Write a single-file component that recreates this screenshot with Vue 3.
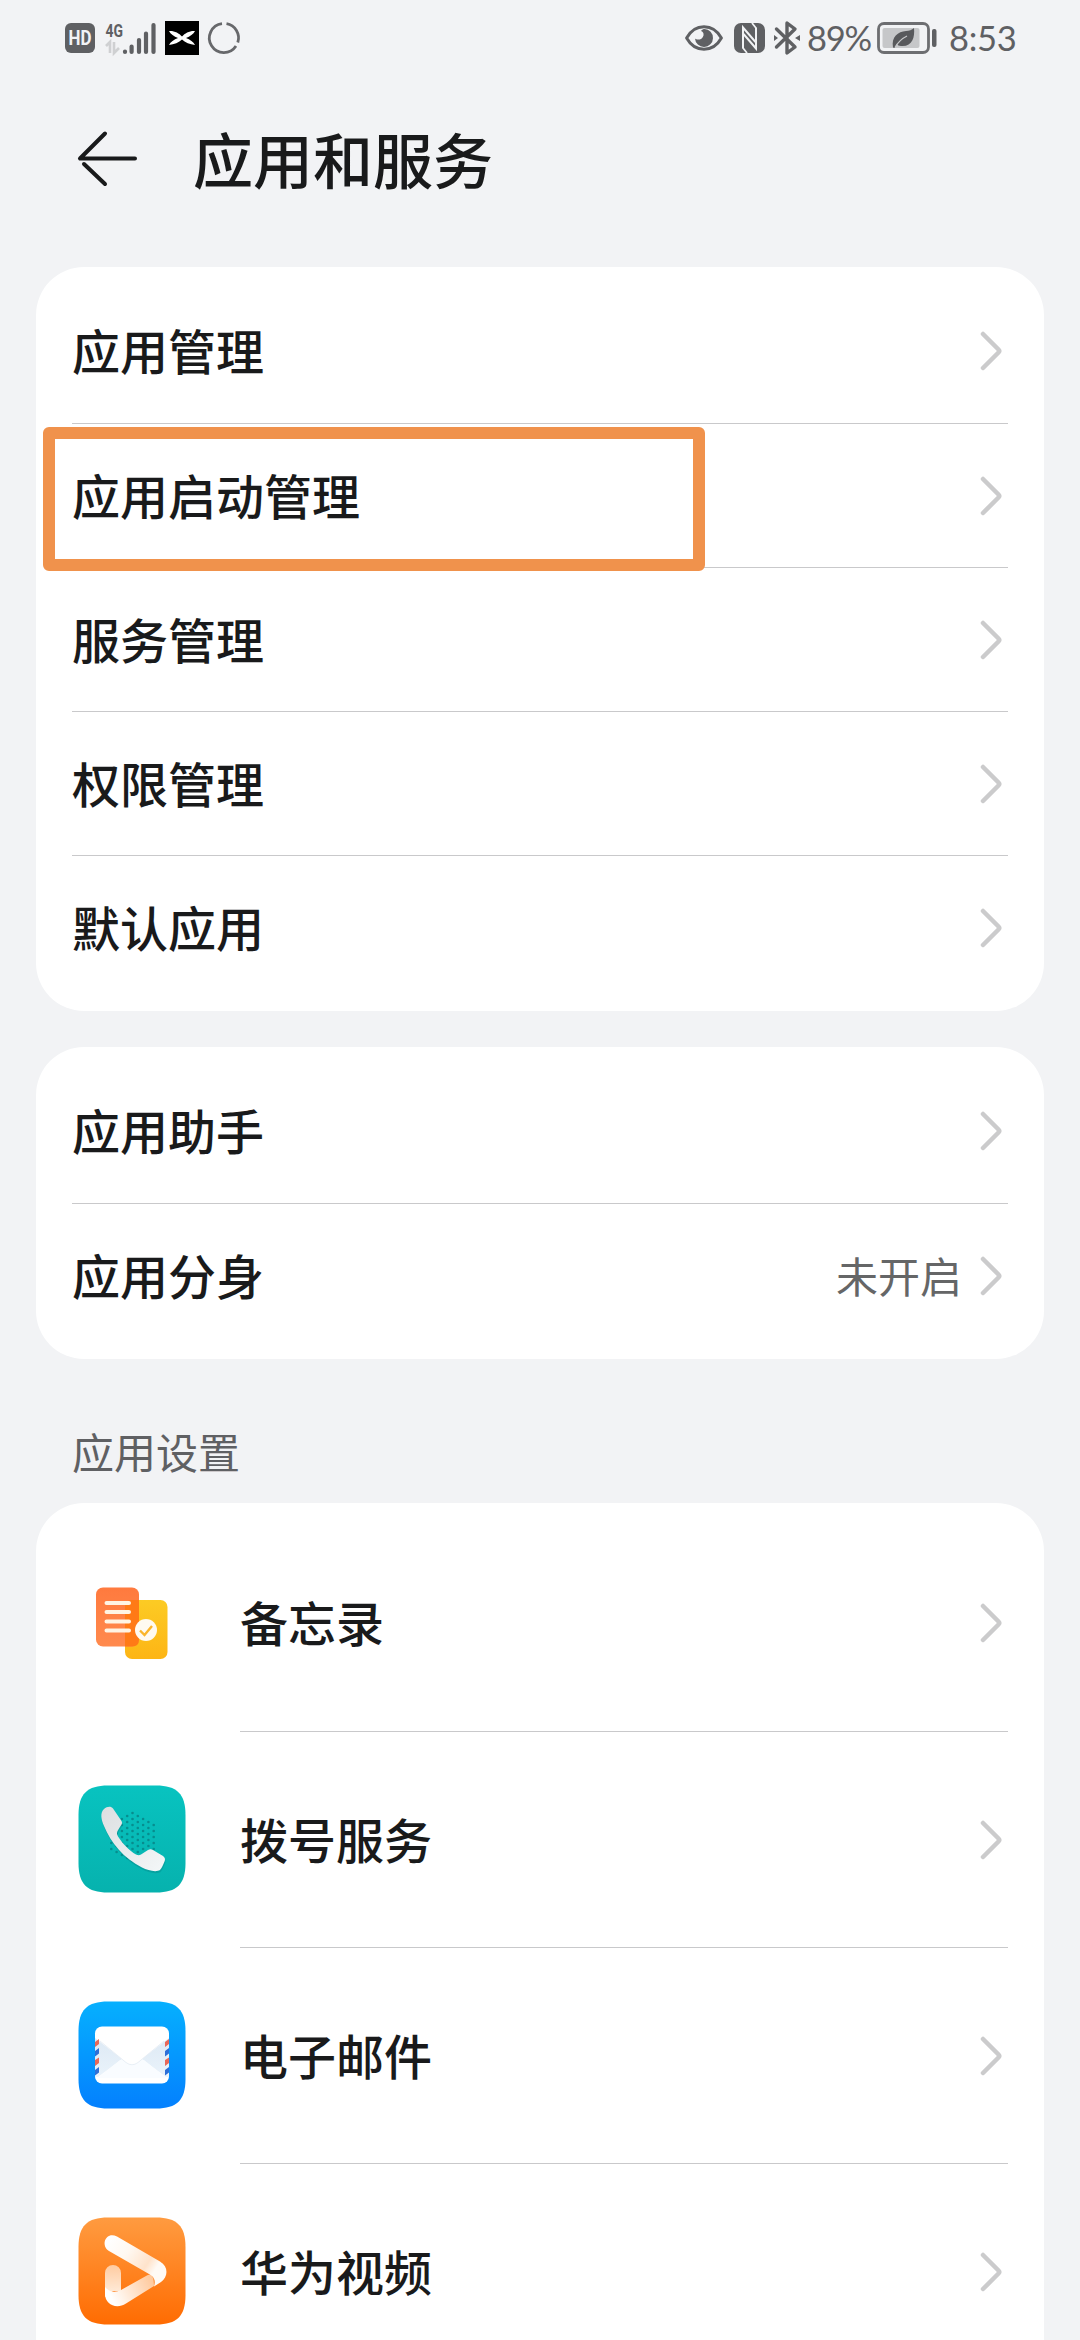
<template>
  <div class="page">
    <div class="status-bar">
      <svg class="hd" width="30" height="30" viewBox="0 0 30 30">
        <rect width="30" height="30" rx="6" fill="#5f6063" />
        <text x="15" y="22" class="hd-text" text-anchor="middle" textLength="23" lengthAdjust="spacingAndGlyphs">HD</text>
      </svg>
      <svg class="signal" width="52" height="42" viewBox="0 -4 52 42">
        <text x="0.500" y="15.500" class="net-text" textLength="17.500" lengthAdjust="spacingAndGlyphs">4G</text>
        <path d="M1 25 L5 21 V32 M9 21 V32 L14 27" fill="none" stroke="#cfd0d2" stroke-width="2.600" />
        <path d="M20 30.600 V31 M26.600 25.500 V31 M34 19 V31 M41 12.500 V31 M48.500 4 V31" fill="none" stroke="#5f6063" stroke-width="4.200" stroke-linecap="round" />
      </svg>
      <svg class="xapp" width="34" height="34" viewBox="0 0 34 34">
        <rect width="34" height="34" fill="#000" />
        <path d="M4 10 C9 9.500 14 12 17 15.500 C20 12 25 9.500 30 10 C28.500 13 25 15.500 21 17 C25 18.500 28.500 21 30 24 C25 23.500 20 21.500 17 18.500 C14 21.500 9 23.500 4 24 C5.500 21 9 18.500 13 17 C9 15.500 5.500 13 4 10 Z" fill="#fff" />
      </svg>
      <svg class="ring" width="34" height="34" viewBox="0 0 34 34">
        <path d="M19.500 2.700 A14.500 14.500 0 0 1 30.800 21.500 M29 25 A14.500 14.500 0 1 1 15 2.700" fill="none" stroke="#67686b" stroke-width="2.800" />
      </svg>

      <div class="status-right">
        <svg class="eye" width="38" height="26" viewBox="0 0 38 26">
          <path d="M1.600 13 C10 -2 28 -2 36.400 13 C28 28 10 28 1.600 13 Z" fill="none" stroke="#5f6063" stroke-width="3" stroke-linejoin="round" />
          <path d="M19.500 4 A9 9 0 1 1 10 13.500 C12 15.500 17.500 15 18.500 10.500 C19 8 17.500 6.500 16 6 C17 4.500 18.500 4 19.500 4 Z" fill="#5f6063" />
        </svg>
        <svg class="nfc" width="31" height="30" viewBox="0 0 31 30">
          <rect width="31" height="30" rx="7" fill="#5f6063" />
          <path d="M9 25.500 V4.500 L21.500 19 M22 4.500 V25.500 L9.500 11" fill="none" stroke="#f2f3f5" stroke-width="2" />
          <path d="M9 25 L13 30 M18 0 L22 5" stroke="#f2f3f5" stroke-width="1.800" />
        </svg>
        <svg class="bt" width="26" height="34" viewBox="0 0 26 34">
          <path d="M2.500 8 L21 26 L13 32 V2 L21 8 L2.500 26" fill="none" stroke="#5f6063" stroke-width="3.400" stroke-linejoin="round" stroke-linecap="round" />
          <path d="M0 14 L4 17 L0 20 Z M26 14 L21 17 L26 20 Z" fill="#5f6063" />
        </svg>
        <span class="percent">89%</span>
        <svg class="battery" width="60" height="32" viewBox="0 0 60 32">
          <rect x="1.500" y="1.500" width="50" height="29" rx="5.500" fill="none" stroke="#6d6e71" stroke-width="2.800" />
          <rect x="5.500" y="6" width="37" height="20" rx="2" fill="#c6c7c9" />
          <path d="M37 6 C38 16 35 25 24 24 C22 24 20.500 23 20 22 L17.500 26 L16 25.500 C14 15 21 9.500 29 9 C32 8.800 35 8 37 6 Z" fill="#58595c" />
          <path d="M18 25.500 C21 20 25 16.500 30 14" fill="none" stroke="#c6c7c9" stroke-width="1.300" />
          <rect x="55" y="7" width="4.500" height="18" rx="2" fill="#5f6063" />
        </svg>
        <span class="time">8:53</span>
      </div>
    </div>

    <div class="header">
      <svg class="back" width="62" height="58" viewBox="0 0 62 58">
        <path d="M28 3.500 L3 28.500 H58 M7 34 L28 54" fill="none" stroke="#191a1b" stroke-width="4" stroke-linecap="round" stroke-linejoin="round" />
      </svg>
      <h1>应用和服务</h1>
    </div>

    <div class="card" v-for="(group, groupIndex) in groups" :key="groupIndex">
      <div class="row" v-for="item in group" :key="item.name">
        <span class="name">{{ item.name }}</span>
        <span class="value" v-if="item.value">{{ item.value }}</span>
        <svg class="chevron" width="24" height="42" viewBox="0 0 24 42">
          <path d="M4 4 L19.500 19.500 Q21 21 19.500 22.500 L4 38" />
        </svg>
        <div class="highlight" v-if="item.marked"></div>
      </div>
    </div>

    <p class="section">应用设置</p>

    <div class="card apps">
      <div class="app-row" v-for="app in apps" :key="app.id">
        <svg v-if="app.id === 'memo'" class="app-icon" viewBox="0 0 108 108">
          <defs>
            <linearGradient id="memoBack" x1="0" y1="0" x2="0" y2="1">
              <stop offset="0" stop-color="#fccb24" />
              <stop offset="1" stop-color="#fdb515" />
            </linearGradient>
            <linearGradient id="memoFront" x1="0" y1="0" x2="0" y2="1">
              <stop offset="0" stop-color="#ff7a3e" />
              <stop offset="1" stop-color="#ff8a4e" />
            </linearGradient>
          </defs>
          <rect x="47" y="31" width="42.500" height="59" rx="7" fill="url(#memoBack)" />
          <rect x="18" y="18.500" width="43" height="59" rx="7" fill="url(#memoFront)" />
          <path d="M47 77.500 V38 Q47 31 54 31 H61 V70.500 Q61 77.500 54 77.500 Z" fill="#ff7a16" />
          <path d="M28.500 34 H51 M28.500 43 H51 M28.500 52.500 H51 M28.500 61.500 H51" stroke="#fff4e4" stroke-width="4" stroke-linecap="round" />
          <circle cx="68" cy="61" r="11" fill="#fffaf0" />
          <path d="M62 61.500 L66.500 66 L74 57" fill="none" stroke="#fbb52a" stroke-width="2.400" />
        </svg>

        <svg v-else-if="app.id === 'phone'" class="app-icon" viewBox="0 0 108 108">
          <defs>
            <linearGradient id="phoneBg" x1="0" y1="0" x2="0" y2="1">
              <stop offset="0" stop-color="#08c3c0" />
              <stop offset="1" stop-color="#06b2ae" />
            </linearGradient>
            <linearGradient id="phoneHandle" x1="0" y1="0" x2="1" y2="1">
              <stop offset="0" stop-color="#dcdfe1" />
              <stop offset="1" stop-color="#f4f7f8" />
            </linearGradient>
          </defs>
          <path :d="tile" fill="url(#phoneBg)" />
          <circle v-for="(dot, dotIndex) in dots" :key="dotIndex" :cx="dot.x" :cy="dot.y" r="1.300" fill="#078d8e" />
          <path d="M26 24 C29 21.500 33 21 35 23.500 L43.500 36 C44.500 38 44 39 42.500 41 L39.500 46 C38.500 48 39 49.500 40 51.500 C45 59 51 65.500 58 69.500 C60 70.500 61.500 70.500 63 69.500 L70 65 C72 64 73 64 75 65 L85 71 C87 72.500 87.500 74.500 86.500 76.500 C85 80 84 83 82 85 C78 87.500 70 85.500 64 82.500 C46 73.500 33 58 26 41 C23 34 22 28 26 24 Z" fill="#058f90" opacity="0.5" transform="translate(0.500 2)" />
          <path d="M26 24 C29 21.500 33 21 35 23.500 L43.500 36 C44.500 38 44 39 42.500 41 L39.500 46 C38.500 48 39 49.500 40 51.500 C45 59 51 65.500 58 69.500 C60 70.500 61.500 70.500 63 69.500 L70 65 C72 64 73 64 75 65 L85 71 C87 72.500 87.500 74.500 86.500 76.500 C85 80 84 83 82 85 C78 87.500 70 85.500 64 82.500 C46 73.500 33 58 26 41 C23 34 22 28 26 24 Z" fill="url(#phoneHandle)" />
        </svg>

        <svg v-else-if="app.id === 'mail'" class="app-icon" viewBox="0 0 108 108">
          <defs>
            <linearGradient id="mailBg" x1="0" y1="0" x2="0" y2="1">
              <stop offset="0" stop-color="#06b0fe" />
              <stop offset="1" stop-color="#0480fe" />
            </linearGradient>
            <linearGradient id="mailSide" x1="0" y1="0" x2="0" y2="1">
              <stop offset="0" stop-color="#dde9f4" />
              <stop offset="1" stop-color="#eaf3fb" />
            </linearGradient>
          </defs>
          <path :d="tile" fill="url(#mailBg)" />
          <rect x="17" y="25.500" width="74" height="57" rx="7" fill="#fff" />
          <path d="M17 37 L44 58 L20 76 H17 Z M91 37 L64 58 L88 76 H91 Z" fill="url(#mailSide)" />
          <path d="M20 77 L42 59 H66 L88 77 Z" fill="#f9fcff" />
          <path d="M17 36 L48 61.500 Q54 66 60 61.500 L91 36 L88 29 H20 Z" fill="#fff" />
          <path d="M22 40 L48 61.500 Q54 66 60 61.500 L86 40" fill="none" stroke="#e3ebf2" stroke-width="0.800" />
          <path d="M17 41 L21 38 V43 L17 46 Z M17 59 L21 56.500 V62 L17 65 Z M91 38 L87 41 V46 L91 43 Z M91 56.500 L87 59 V65 L91 62 Z" fill="#e8695a" />
          <path d="M17 50 L21 47 V52.500 L17 55.500 Z M17 69 L21 66 V71.500 L17 74.500 Z M91 47 L87 50 V55.500 L91 52.500 Z M91 66 L87 69 V74.500 L91 71.500 Z" fill="#2e6fd6" />
        </svg>

        <svg v-else class="app-icon" viewBox="0 0 108 108">
          <defs>
            <linearGradient id="videoBg" x1="0" y1="0" x2="0" y2="1">
              <stop offset="0" stop-color="#ff9b40" />
              <stop offset="1" stop-color="#ff6c02" />
            </linearGradient>
            <linearGradient id="videoTop" gradientUnits="userSpaceOnUse" x1="30" y1="24" x2="84" y2="60">
              <stop offset="0" stop-color="#fff" />
              <stop offset="0.350" stop-color="#fff8f1" />
              <stop offset="0.700" stop-color="#ffe3cb" />
              <stop offset="0.850" stop-color="#fffaf5" />
            </linearGradient>
            <linearGradient id="videoLow" gradientUnits="userSpaceOnUse" x1="34" y1="82" x2="80" y2="58">
              <stop offset="0" stop-color="#fff" />
              <stop offset="1" stop-color="#ffc08c" />
            </linearGradient>
            <linearGradient id="videoLeft" x1="0" y1="0" x2="0" y2="1">
              <stop offset="0" stop-color="#ffcba0" />
              <stop offset="1" stop-color="#fff0e2" />
            </linearGradient>
          </defs>
          <path :d="tile" fill="url(#videoBg)" />
          <path d="M27 56 A8 8 0 0 1 43 56 V74 H35 L27 80 Z" fill="url(#videoLeft)" />
          <path d="M27 70 C31 75 37 76 43 73 L68 59 Q76 54 76 69 L48 86.500 C38 93 27 87 27 77 Z" fill="url(#videoLow)" />
          <path d="M39 19.500 L82 44.500 C91 50 90 60 83 65 L76 69.500 C78 63 76 60 71 57 L31 34 C22 28 28 14 39 19.500 Z" fill="url(#videoTop)" />
        </svg>

        <div class="app-body">
          <span class="name">{{ app.name }}</span>
          <svg class="chevron" width="24" height="42" viewBox="0 0 24 42">
            <path d="M4 4 L19.500 19.500 Q21 21 19.500 22.500 L4 38" />
          </svg>
        </div>
      </div>
    </div>
  </div>
</template>

<script setup>
const groups = [
  [
    { name: '应用管理' },
    { name: '应用启动管理', marked: true },
    { name: '服务管理' },
    { name: '权限管理' },
    { name: '默认应用' }
  ],
  [
    { name: '应用助手' },
    { name: '应用分身', value: '未开启' }
  ]
];

const apps = [
  { id: 'memo', name: '备忘录' },
  { id: 'phone', name: '拨号服务' },
  { id: 'mail', name: '电子邮件' },
  { id: 'video', name: '华为视频' }
];

// rounded tile shared by the app icons
const tile = 'M30 0.5 H78 C99 0.5 107.5 9 107.5 30 V78 C107.5 99 99 107.5 78 107.5 H30 C9 107.5 0.5 99 0.5 78 V30 C0.5 9 9 0.5 30 0.5 Z';

// hexagonal dot pattern behind the handset
const dots = [];
for (let col = -4; col <= 4; col++) {
  const count = 9 - Math.abs(col);
  for (let i = 0; i < count; i++) {
    dots.push({ x: 54.5 + col * 5.3, y: 52 + (i - (count - 1) / 2) * 6 });
  }
}
</script>

<style>
body {
  margin: 0;
  background: #f2f3f5;
}
</style>

<style scoped>
.page {
  width: 1080px;
  height: 2340px;
  overflow: hidden;
  background: #f2f3f5;
  color: #191a1b;
  font-family: 'Noto Sans CJK SC', sans-serif;
}

.status-bar {
  display: flex;
  align-items: center;
  height: 76px;
  padding: 0 65px;
  box-sizing: border-box;
}

.status-bar svg {
  flex: none;
  overflow: visible;
}

.hd-text {
  font-family: Roboto, sans-serif;
  font-size: 20px;
  font-weight: 700;
  fill: #f2f3f5;
}

.net-text {
  font-family: Roboto, sans-serif;
  font-size: 19px;
  font-weight: 700;
  fill: #5f6063;
}

.signal {
  margin-left: 10px;
}

.xapp {
  margin-left: 8px;
}

.ring {
  margin-left: 8px;
}

.status-right {
  display: flex;
  align-items: center;
  margin-left: auto;
  color: #5f6063;
  font-family: Lato, sans-serif;
  font-size: 34.5px;
  line-height: 40px;
}

.nfc {
  margin-left: 11px;
}

.bt {
  margin-left: 9px;
}

.percent {
  width: 63px;
  margin-left: 7px;
  padding-bottom: 1px;
  letter-spacing: -1.2px;
  white-space: nowrap;
}

.battery {
  margin-left: 7px;
}

.time {
  width: 66px;
  margin-left: 12px;
  padding-bottom: 1px;
  letter-spacing: -0.3px;
  white-space: nowrap;
}

.header {
  display: flex;
  align-items: center;
  height: 166px;
  margin-bottom: 25px;
  padding-left: 77px;
}

.back {
  margin-right: 54px;
}

h1 {
  margin: 0;
  padding-bottom: 2px;
  font-size: 60px;
  font-weight: 500;
  line-height: 80px;
}

.card {
  margin: 0 36px 36px;
  padding: 12px 36px;
  border-radius: 48px;
  background: #fff;
}

.row {
  position: relative;
  display: flex;
  align-items: center;
  height: 144px;
  box-sizing: border-box;
}

.row + .row {
  border-top: 1px solid #c9c9cb;
}

.name {
  flex: 1;
  padding-bottom: 4px;
  font-size: 48px;
  font-weight: 500;
  line-height: 64px;
}

.value {
  margin-right: 17px;
  padding-bottom: 2px;
  color: #656667;
  font-size: 42px;
}

.chevron {
  margin-right: 5px;
}

.chevron path {
  fill: none;
  stroke: #cbcbcc;
  stroke-width: 4.5;
  stroke-linecap: round;
}

.highlight {
  position: absolute;
  top: 3px;
  left: -29px;
  width: 662px;
  height: 144px;
  box-sizing: border-box;
  border: 12px solid #f0924c;
  border-radius: 6px;
  z-index: 1;
}

.section {
  margin: 0;
  padding: 26px 72px 22px;
  color: #5f6063;
  font-size: 42px;
  line-height: 60px;
}

.apps {
  margin-bottom: 0;
}

.app-row {
  display: flex;
  align-items: center;
  height: 216px;
}

.app-icon {
  flex: none;
  width: 108px;
  height: 108px;
  margin-left: 6px;
}

.app-body {
  flex: 1;
  display: flex;
  align-items: center;
  height: 216px;
  margin-left: 54px;
  box-sizing: border-box;
}

.app-row + .app-row .app-body {
  border-top: 1px solid #c9c9cb;
}
</style>
